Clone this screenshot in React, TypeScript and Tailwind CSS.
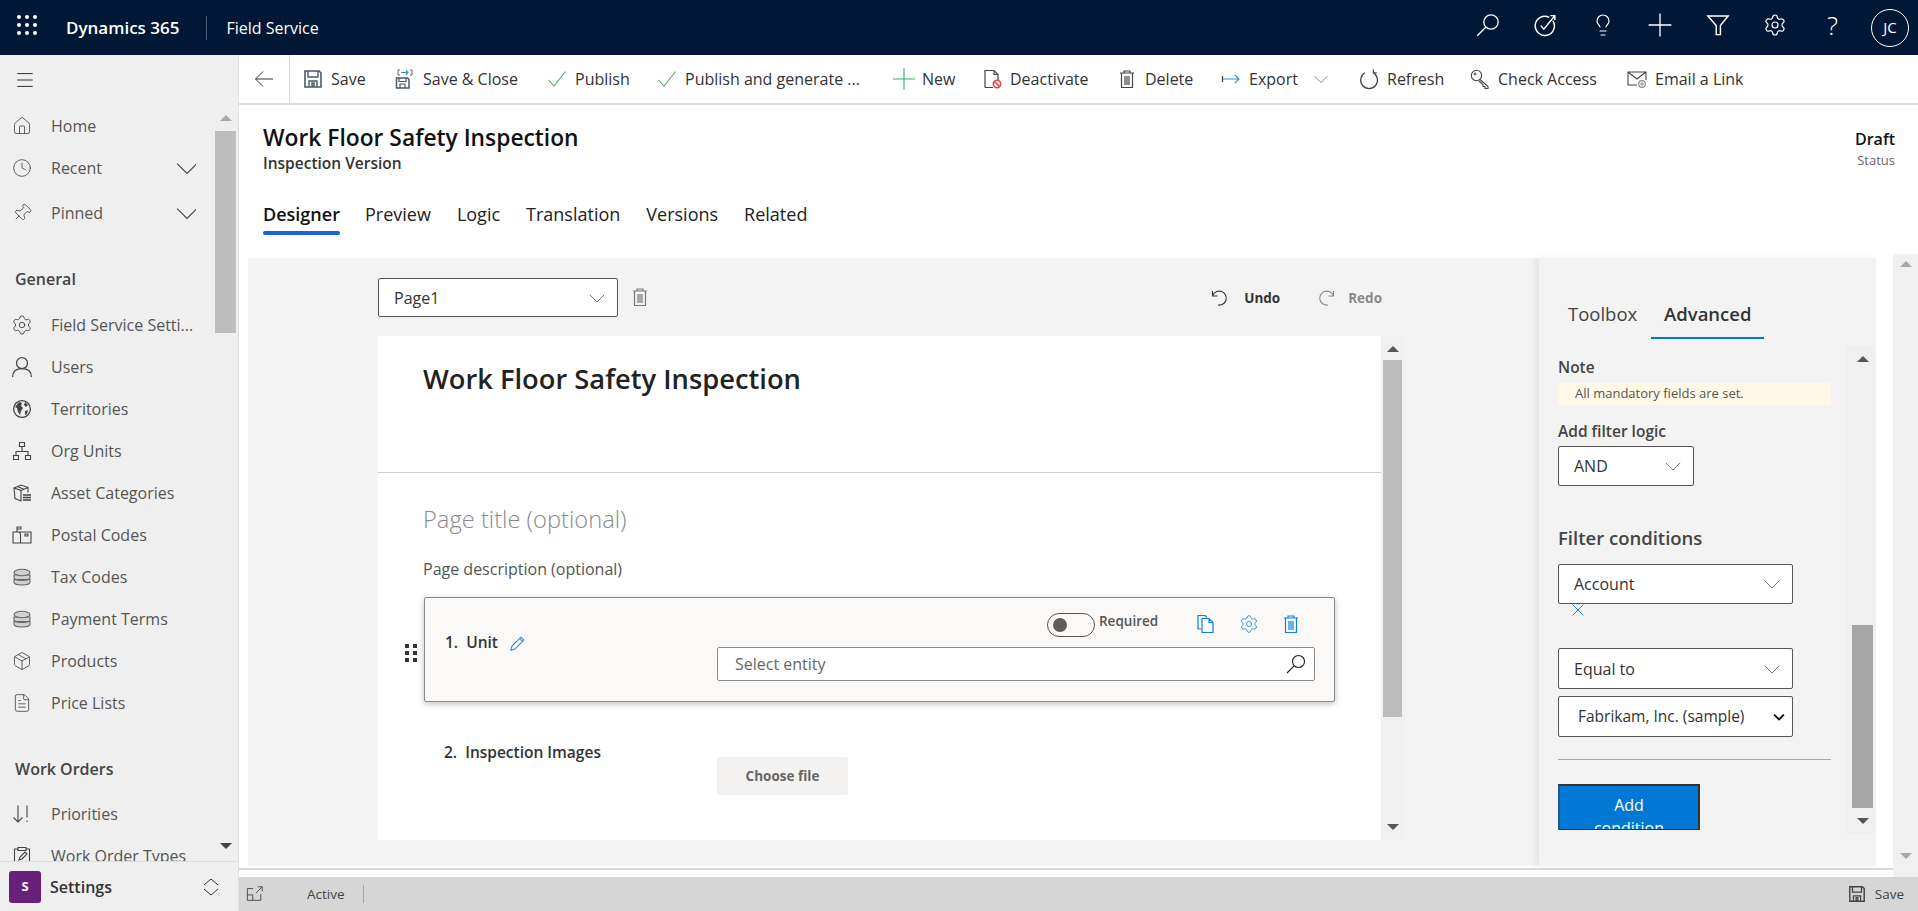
import type { ReactNode } from "react";
import {
  Clock,
  FileText,
  Home,
  Lightbulb,
  Menu,
  Package,
  Pin,
  Settings as Gear,
} from "lucide-react";

function Ico({ children, className = "" }: { children: ReactNode; className?: string }) {
  return (
    <svg viewBox="0 0 20 20" fill="none" stroke="currentColor" strokeWidth="1" className={"w-5 h-5 shrink-0 " + className}>
      {children}
    </svg>
  );
}

const Chev = ({ className = "" }: { className?: string }) => (
  <Ico className={className}>
    <path d="M1 6l9 9 9-9" />
  </Ico>
);

const Magnifier = ({ className = "", width = "1" }: { className?: string; width?: string }) => (
  <Ico className={className}>
    <circle cx="12.5" cy="7.5" r="6" strokeWidth={width} />
    <path d="M8.2 11.800L1 19" strokeWidth={width} />
  </Ico>
);

const Check = () => (
  <Ico className="text-[#45a86e]">
    <path d="M1.5 11l5.5 6L18.5 2.5" strokeWidth="1.1" />
  </Ico>
);

const TrashIcon = ({ className = "" }: { className?: string }) => (
  <Ico className={className}>
    <path d="M3 4h14M7 4V2h6v2M4.5 4v14.5h11V4M8 7v9M10 7v9M12 7v9" strokeWidth="1.2" />
  </Ico>
);

const SaveIcon = ({ className = "text-[#4a5a68]" }: { className?: string }) => (
  <Ico className={className}>
    <path d="M2 2h14l2 2v14H2z" strokeWidth="1.6" />
    <path d="M5 2v6h10V2M6 18v-6h8v6M9 14h2v3H9z" strokeWidth="1.4" />
  </Ico>
);

const SaveCloseIcon = () => (
  <Ico className="text-[#4a5a68]">
    <path d="M1.5 9h11l1.5 1.5V19h-12.5z" strokeWidth="1.5" />
    <path d="M4 9v3.5h7V9M5 19v-4h5v4" strokeWidth="1.2" />
    <path d="M5 1H3v5h2M15 1h2v5h-2" strokeWidth="1" className="text-[#5a6a78]" />
    <path d="M6 3.5h7M11 1.5l2 2-2 2" stroke="#2f8fd8" strokeWidth="1.1" />
  </Ico>
);

const DeactivateIcon = () => (
  <Ico className="text-[#444]">
    <path d="M3 18.5V1.5h9l4 4v6M12 1.5v4h4M3 18.5h8" strokeWidth="1.2" />
    <circle cx="15" cy="15" r="3.7" stroke="#e8404a" strokeWidth="1.6" />
    <path d="M12.5 12.5l5 5" stroke="#e8404a" strokeWidth="1.6" />
  </Ico>
);

const ExportIcon = () => (
  <Ico>
    <path d="M1.5 7v6" stroke="#444" strokeWidth="1.3" />
    <path d="M2 10h16M14 6l4 4-4 4" stroke="#2f8fd8" strokeWidth="1.1" />
  </Ico>
);

const RefreshIcon = () => (
  <Ico className="h-[22px] text-[#444]">
    <path d="M6 3.800a8.400 8.400 0 1 0 8.200 0M14.400 0.500v3.300h3.300" strokeWidth="1.2" />
  </Ico>
);

const KeyIcon = () => (
  <Ico className="text-[#444]">
    <circle cx="6.5" cy="6.5" r="5.2" strokeWidth="1.1" />
    <circle cx="5" cy="5" r="1" strokeWidth="1" />
    <path d="M10 10.5l8 7v2h-3v-2h-2v-2l-4-3.5" strokeWidth="1.1" />
  </Ico>
);

const EmailIcon = () => (
  <Ico className="text-[#444]">
    <path d="M10 16H1V3h18v8M1 3l9 7 9-7" strokeWidth="1.1" />
    <circle cx="15" cy="15" r="3.3" stroke="#888" strokeWidth="1.2" />
    <circle cx="15" cy="15" r="1.2" stroke="#888" />
  </Ico>
);

const PlusGreen = () => (
  <Ico className="h-[22px] w-[22px] -mx-px text-[#2fb56e]">
    <path d="M10 0v20M0 10h20" strokeWidth="1" />
  </Ico>
);

const commands = [
  { label: "Save", icon: <SaveIcon />, cls: "w-[92px]" },
  { label: "Save & Close", icon: <SaveCloseIcon />, cls: "w-[152px]" },
  { label: "Publish", icon: <Check />, cls: "w-[110px]" },
  { label: "Publish and generate ...", icon: <Check />, cls: "w-[237px]" },
  { label: "New", icon: <PlusGreen />, cls: "w-[88px]" },
  { label: "Deactivate", icon: <DeactivateIcon />, cls: "w-[135px]" },
  { label: "Delete", icon: <TrashIcon className="text-[#444]" />, cls: "w-[104px]" },
  { label: "Export", icon: <ExportIcon />, cls: "w-[138px]", caret: true },
  { label: "Refresh", icon: <RefreshIcon />, cls: "w-[111px]" },
  { label: "Check Access", icon: <KeyIcon />, cls: "w-[157px]" },
  { label: "Email a Link", icon: <EmailIcon />, cls: "w-[130px]" },
];

const RingArrow = () => (
  <Ico className="mb-[6px] w-6 h-6 text-white">
    <path d="M16.5 6.3a8 8 0 1 1-3-2.7" strokeWidth="1.2" />
    <path d="M6.5 10.5l2.5 3L18 2.5M14.5 2.2h3.7v3.7" strokeWidth="1.2" />
  </Ico>
);

const FunnelIcon = () => (
  <Ico className="mb-[6px] w-6 h-6 text-white">
    <path d="M1.5 2.5h17L12 10.5V18H8.5v-7.5z" strokeWidth="1.2" />
  </Ico>
);

function TopBar() {
  return (
    <div className="flex h-[55px] shrink-0 items-center bg-[#001836] text-white">
      <div className="mb-[5px] ml-[17px] grid w-5 grid-cols-3 gap-1">
        {Array.from({ length: 9 }).map((_, i) => (
          <span key={i} className="h-1 w-1 rounded-full bg-white" />
        ))}
      </div>
      <span className="ml-[29px] text-[17px] font-semibold">Dynamics 365</span>
      <span className="ml-[27px] h-6 w-px bg-[#4a5a70]" />
      <span className="ml-[19px] text-[16px]">Field Service</span>
      <div className="ml-auto flex items-center gap-[33.5px] pr-[9px]">
        <Magnifier className="mb-[6px] h-6 w-6" width="1.1" />
        <RingArrow />
        <Lightbulb strokeWidth={1.2} className="mb-[6px] h-6 w-6" />
        <Ico className="mb-[6px] h-6 w-6">
          <path d="M10 0.500v19M0.500 10h19" strokeWidth="1.1" />
        </Ico>
        <FunnelIcon />
        <Gear strokeWidth={1.2} className="mb-[6px] h-6 w-6" />
        <span className="mb-[6px] w-6 text-center text-[26px] font-light leading-7">?</span>
        <span className="ml-[-7px] flex h-[38px] w-[38px] items-center justify-center rounded-full border border-white text-[15px]">JC</span>
      </div>
    </div>
  );
}

function CommandBar() {
  return (
    <div className="flex h-[50px] shrink-0 items-center border-b-2 border-[#dcdcdc] bg-white text-[16px] text-[#333]">
      <div className="flex h-full w-[51px] items-center justify-center border-r border-[#dcdcdc]">
        <Ico className="text-[#333]">
          <path d="M19 10H1.5M9 2.5L1.5 10 9 17.5" />
        </Ico>
      </div>
      <div className="ml-[13px] flex items-center">
        {commands.map((c) => (
          <div key={c.label} className={"flex items-center gap-2 " + c.cls}>
            {c.icon}
            <span className="whitespace-nowrap">{c.label}</span>
            {c.caret && <Chev className="ml-[8px] h-[14px] w-[14px] text-[#555]" />}
          </div>
        ))}
      </div>
    </div>
  );
}

const UserIcon = () => (
  <Ico className="h-[22px] w-[22px]">
    <circle cx="10" cy="6.500" r="5" strokeWidth="1.1" />
    <path d="M1.500 19c0-5 3.500-7.500 8.500-7.500s8.500 2.500 8.500 7.500" strokeWidth="1.1" />
  </Ico>
);

const GlobeIcon = () => (
  <Ico>
    <circle cx="10" cy="10" r="8.4" strokeWidth="1.3" />
    <path d="M3 8l4-5 3 1-1 3 2 2-2 3-1 4-2-3-1-4zM13 3l3 3-2 2-2-2zM13 12l3-1-1 4-2 1z" fill="currentColor" stroke="none" />
  </Ico>
);

const OrgIcon = () => (
  <Ico>
    <path d="M7.5 1.5h5v4h-5zM1.5 14.5h5v4h-5zM13.5 14.5h5v4h-5zM10 5.5v5M4 14.5v-4h12v4" strokeWidth="1.1" />
  </Ico>
);

const AssetIcon = () => (
  <Ico>
    <path d="M2 5l7 2.5V18l-6-2.5zM9 7.500l7-3v5M2 5l7-3 7 2.500M5.500 3.500l7 3" strokeWidth="1.1" />
    <path d="M11 12h8M11 14.500h8M11 17h8" strokeWidth="1.3" />
  </Ico>
);

const MailboxIcon = () => (
  <Ico>
    <path d="M1 18V7h18v11zM6 7a2.500 2.500 0 0 1 2.500 2.500V18M5 7V2h4v2H5M13 11h3v-2h-3z" strokeWidth="1.1" />
  </Ico>
);

const StackIcon = () => (
  <Ico className="text-[#666]">
    <path d="M2 15c0 1.700 3.500 3 8 3s8-1.300 8-3v-2.500H2zM2 10.500c0 1.700 3.500 3 8 3s8-1.300 8-3V8H2z" fill="#cfcfcf" strokeWidth="1.1" />
    <ellipse cx="10" cy="5.500" rx="8" ry="3.200" fill="#cfcfcf" strokeWidth="1.1" />
  </Ico>
);

const PriorityIcon = () => (
  <Ico>
    <path d="M6 1.500V18M1.500 13.500L6 18l4.500-4.500M15 1.500v12M15 16.500v1.500" strokeWidth="1.1" />
  </Ico>
);

const ClipboardIcon = () => (
  <Ico>
    <path d="M6 3H2.500v15h15V3H14M6 1.500h8v3H6zM7 14l1-3 5-5 2 2-5 5z" strokeWidth="1.1" />
  </Ico>
);

const generalItems = [
  { label: "Field Service Setti...", icon: <Gear strokeWidth={1} className="h-[22px] w-[22px] shrink-0" /> },
  { label: "Users", icon: <UserIcon /> },
  { label: "Territories", icon: <GlobeIcon /> },
  { label: "Org Units", icon: <OrgIcon /> },
  { label: "Asset Categories", icon: <AssetIcon /> },
  { label: "Postal Codes", icon: <MailboxIcon /> },
  { label: "Tax Codes", icon: <StackIcon /> },
  { label: "Payment Terms", icon: <StackIcon /> },
  { label: "Products", icon: <Package strokeWidth={1} className="h-5 w-5 shrink-0" /> },
  { label: "Price Lists", icon: <FileText strokeWidth={1} className="h-5 w-5 shrink-0" /> },
];

function NavRow({ label, icon, chevron }: { label: string; icon: ReactNode; chevron?: boolean }) {
  return (
    <div className="flex h-[42px] shrink-0 items-center gap-[19px] pl-[12px] text-[16px] text-[#555]">
      <span className="flex w-5 justify-center text-[#444]">{icon}</span>
      <span className="whitespace-nowrap">{label}</span>
      {chevron && <Chev className="ml-auto mr-[-4px] h-[22px] w-[22px] text-[#444]" />}
    </div>
  );
}

function NavHeader({ children, cls }: { children: ReactNode; cls: string }) {
  return <div className={"shrink-0 pl-[15px] pt-[35px] text-[16px] font-semibold leading-5 text-[#444] " + cls}>{children}</div>;
}

function Sidebar() {
  return (
    <div className="flex w-[239px] shrink-0 flex-col border-r border-[#e2e2e2] bg-[#efefef]">
      <div className="flex h-[50px] shrink-0 items-center pl-[14px]">
        <Menu strokeWidth={1} className="h-[22px] w-[22px] text-[#222]" />
      </div>
      <div className="flex min-h-0 flex-1">
        <div className="w-[196px] shrink-0 overflow-hidden pr-[2px]">
          <NavRow label="Home" icon={<Home strokeWidth={1} className="h-5 w-5" />} />
          <NavRow label="Recent" icon={<Clock strokeWidth={1} className="h-[22px] w-[22px]" />} chevron />
          <div className="h-[3px]" />
          <NavRow label="Pinned" icon={<Pin strokeWidth={1} className="h-5 w-5 rotate-45" />} chevron />
          <NavHeader cls="h-[70px]">General</NavHeader>
          {generalItems.map((it) => (
            <NavRow key={it.label} label={it.label} icon={it.icon} />
          ))}
          <NavHeader cls="h-[69px]">Work Orders</NavHeader>
          <NavRow label="Priorities" icon={<PriorityIcon />} />
          <NavRow label="Work Order Types" icon={<ClipboardIcon />} />
        </div>
        <div className="ml-[19px] mt-[2px] flex w-[21px] flex-col items-center">
          <span className="mt-[8px] h-0 w-0 border-x-[6px] border-b-[6px] border-x-transparent border-b-[#a8a8a8]" />
          <div className="mt-[10px] h-[202px] w-full bg-[#bdbdbd]" />
          <span className="mt-auto mb-[12px] h-0 w-0 border-x-[6px] border-t-[6px] border-x-transparent border-t-[#444]" />
        </div>
      </div>
      <div className="flex h-[50px] shrink-0 items-center border-t border-[#dcdcdc] pl-[9px]">
        <span className="flex h-8 w-8 items-center justify-center rounded-[3px] bg-[#68217a] text-[13px] font-bold text-white">S</span>
        <span className="ml-[9px] text-[16px] font-semibold text-[#333]">Settings</span>
        <Ico className="ml-auto mr-[17px] text-[#333]">
          <path d="M3 8l7-6 7 6M3 12l7 6 7-6" />
        </Ico>
      </div>
    </div>
  );
}

function ScrollStrip({ thumb, up = "border-b-[#555]", down = "border-t-[#555]" }: { thumb?: ReactNode; up?: string; down?: string }) {
  return (
    <div className="flex h-full flex-col items-center">
      <span className={"mt-[10px] h-0 w-0 border-x-[6px] border-b-[6px] border-x-transparent " + up} />
      {thumb}
      <span className={"mt-auto mb-[10px] h-0 w-0 border-x-[6px] border-t-[6px] border-x-transparent " + down} />
    </div>
  );
}

function Select({ label, cls }: { label: string; cls: string }) {
  return (
    <div className={"flex items-center justify-between rounded-[2px] border border-[#555] bg-white pl-[15px] pr-[12px] text-[16px] text-[#333] " + cls}>
      <span>{label}</span>
      <Chev className="h-[16px] w-[16px] text-[#555]" />
    </div>
  );
}

function Designer() {
  return (
    <div className="min-w-0 flex-1 pl-[130px]">
      <div className="flex h-[78px] items-start pt-[20px]">
        <Select label="Page1" cls="h-[39px] w-[240px]" />
        <TrashIcon className="ml-[12px] mt-[9px] text-[#777]" />
        <div className="ml-auto mr-[157px] mt-[10px] flex items-center text-[13.5px] font-bold">
          <Ico className="text-[#333]">
            <path d="M3 7h0a7 7 0 1 1 5 10M2.500 3v5h5" strokeWidth="1.1" />
          </Ico>
          <span className="ml-[14px] text-[#333]">Undo</span>
          <Ico className="ml-[36px] text-[#888]">
            <path d="M17 7a7 7 0 1 0-5 10M17.500 3v5h-5" strokeWidth="1.1" />
          </Ico>
          <span className="ml-[12px] text-[#888]">Redo</span>
        </div>
      </div>
      <div className="flex h-[504px] w-[1026px] bg-white">
        <div className="w-[1003px] shrink-0">
          <div className="h-[137px] border-b border-[#cfcfcf] pl-[45px] pt-[25px] text-[27.3px] font-semibold leading-9 text-[#222]">
            Work Floor Safety Inspection
          </div>
          <div className="pl-[45px] pt-[29px] text-[23.7px] font-light leading-[34px] text-[#8a8a8a]">Page title (optional)</div>
          <div className="pl-[45px] pt-[23px] text-[16px] leading-5 text-[#555]">Page description (optional)</div>
          <div className="relative ml-[46px] mt-[18px] flex h-[105px] w-[911px] rounded-[2px] border border-[#8a8a8a] bg-[#faf9f7] pl-[20px] shadow-[0_2px_6px_rgba(0,0,0,0.25)]">
            <div className="absolute left-[-20px] top-[46px] grid grid-cols-2 gap-x-[4px] gap-y-[3px]">
              {Array.from({ length: 6 }).map((_, i) => (
                <span key={i} className="h-[4px] w-[4px] bg-[#333]" />
              ))}
            </div>
            <div className="flex w-[272px] shrink-0 items-start pt-[33px] text-[15.5px] font-semibold text-[#333]">
              <span>1.&nbsp;&nbsp;Unit</span>
              <Ico className="ml-[11px] mt-[4px] h-[17px] w-[17px] text-[#1e88e5]">
                <path d="M2 18l1.500-5L14 2.500l3.500 3.500L7 16.500zM12.500 4l3.500 3.500" strokeWidth="1.2" />
              </Ico>
            </div>
            <div className="flex w-[598px] shrink-0 flex-col">
              <div className="flex h-[49px] items-center pl-[330px] pb-[2px]">
                <span className="mt-[6px] flex h-[24px] w-[48px] items-center rounded-full border border-[#555] pl-[5px]">
                  <span className="h-[14px] w-[14px] rounded-full bg-[#605e5c]" />
                </span>
                <span className="ml-[4px] text-[13.5px] font-semibold text-[#555]">Required</span>
                <Ico className="ml-[38px] mt-[5px] text-[#0f7fe0]">
                  <path d="M5 15H2V1.500h7l2 2M6 4.500h7l4 4v10H6zM13 4.500v4h4" strokeWidth="1.200" />
                </Ico>
                <Gear strokeWidth={1} className="ml-[23px] mt-[5px] h-5 w-5 text-[#0f7fe0]" />
                <TrashIcon className="ml-[22px] mt-[5px] text-[#0f7fe0]" />
              </div>
              <div className="flex h-[34px] items-center justify-between rounded-[2px] border border-[#8a8a8a] bg-white pl-[17px] pr-[8px] text-[16px] text-[#666]">
                <span>Select entity</span>
                <Magnifier className="text-[#222]" width="1.1" />
              </div>
            </div>
          </div>
          <div className="ml-[66px] mt-[39px] flex">
            <div className="w-[273px] shrink-0 text-[15.5px] font-semibold text-[#333]">2.&nbsp;&nbsp;Inspection Images</div>
            <div className="mt-[16px] flex h-[38px] w-[131px] items-center justify-center rounded-[2px] bg-[#f3f2f1] text-[13.5px] font-bold text-[#666]">
              Choose file
            </div>
          </div>
        </div>
        <div className="flex-1 bg-[#f0f0f0]">
          <ScrollStrip thumb={<div className="mt-[8px] h-[357px] w-[19px] bg-[#bdbdbd]" />} />
        </div>
      </div>
    </div>
  );
}

function PanelLabel({ children }: { children: ReactNode }) {
  return <div className="text-[15.5px] font-semibold leading-5 text-[#444]">{children}</div>;
}

function RightPanel() {
  return (
    <div className="flex w-[337px] shrink-0 flex-col shadow-[-4px_0_6px_rgba(0,0,0,0.06)]">
      <div className="h-[88px] pl-[29px] pt-[45px]">
        <div className="flex text-[18.5px] leading-[22px] text-[#444]">
          <span>Toolbox</span>
          <div className="ml-[14px] flex w-[113px] flex-col items-center">
            <span className="font-semibold text-[#333]">Advanced</span>
            <span className="mt-[12px] h-[2px] w-full bg-[#0078d4]" />
          </div>
        </div>
      </div>
      <div className="flex h-[488px]">
        <div className="h-[484px] w-[306px] shrink-0 overflow-hidden pl-[19px]">
          <div className="pt-[11px]">
            <PanelLabel>Note</PanelLabel>
          </div>
          <div className="mt-[6px] flex h-[22px] w-[273px] items-center bg-[#fff8e6] pl-[17px] text-[13px] text-[#555]">All mandatory fields are set.</div>
          <div className="mt-[16px]">
            <PanelLabel>Add filter logic</PanelLabel>
          </div>
          <Select label="AND" cls="mt-[5px] h-[40px] w-[136px]" />
          <div className="mt-[40px] text-[18.5px] font-semibold leading-6 text-[#444]">Filter conditions</div>
          <Select label="Account" cls="mt-[14px] h-[40px] w-[235px]" />
          <Ico className="ml-[14px] mb-[2px] h-[12px] w-[12px] text-[#0078d4]">
            <path d="M1 1l18 18M19 1L1 19" strokeWidth="1.500" />
          </Ico>
          <Select label="Equal to" cls="mt-[32px] h-[41px] w-[235px]" />
          <div className="mt-[7px] flex h-[41px] w-[235px] items-center justify-between rounded-[2px] border border-[#555] bg-white pl-[19px] pr-[6px] text-[15.5px] text-[#333]">
            <span>Fabrikam, Inc. (sample)</span>
            <Ico className="h-[14px] w-[14px] text-[#111]">
              <path d="M3 6.500l7 7 7-7" strokeWidth="2.600" />
            </Ico>
          </div>
          <div className="mt-[22px] h-px w-[273px] bg-[#a8a8a8]" />
          <div className="mt-[24px] h-[47px] w-[142px] overflow-hidden border-2 border-[#333] border-l-[#1a5a90] bg-[#0078d4] pt-[8px] text-center text-[16px] leading-[23px] text-white">
            Add
            <br />
            condition
          </div>
        </div>
        <div className="ml-[1px] flex-1 bg-[#f0f0f0] pr-[3px] pl-[6px]">
          <ScrollStrip thumb={<div className="mt-[263px] h-[183px] w-[21px] bg-[#a6a6a6]" />} />
        </div>
      </div>
    </div>
  );
}

export default function App() {
  return (
    <div className="flex h-[911px] w-[1918px] flex-col overflow-hidden bg-white font-['Open_Sans',sans-serif]">
      <TopBar />
      <div className="flex min-h-0 flex-1">
        <Sidebar />
        <div className="flex min-w-0 flex-1 flex-col">
          <CommandBar />
          <div className="h-[149px] shrink-0 pl-[24px] pr-[23px]">
            <div className="flex items-start justify-between">
              <div>
                <h1 className="mt-[18px] text-[22.8px] font-semibold leading-[30px] text-[#111]">Work Floor Safety Inspection</h1>
                <div className="text-[15.5px] font-semibold leading-5 text-[#333]">Inspection Version</div>
              </div>
              <div className="mt-[24px] text-right">
                <div className="text-[16px] font-semibold leading-5 text-[#111]">Draft</div>
                <div className="mt-[1px] text-[13px] leading-5 text-[#666]">Status</div>
              </div>
            </div>
            <div className="mt-[30px] flex text-[18px] leading-[22px] text-[#222]">
              <div className="mr-[25px] flex w-[77px] flex-col">
                <span className="whitespace-nowrap font-semibold text-[#111]">Designer</span>
                <span className="mt-[6px] h-[4px] rounded-full bg-[#1a63e0]" />
              </div>
              <span className="mr-[26px]">Preview</span>
              <span className="mr-[26px]">Logic</span>
              <span className="mr-[26px]">Translation</span>
              <span className="mr-[26px]">Versions</span>
              <span>Related</span>
            </div>
          </div>
          <div className="flex min-h-0 flex-1">
            <div className="min-w-0 flex-1 pt-[4px]">
              <div className="ml-[9px] flex h-[608px] w-[1628px] bg-[#f3f3f3]">
                <Designer />
                <RightPanel />
              </div>
              <div className="mt-[2px] h-[2px] bg-[#d8d8d8]" />
            </div>
            <div className="w-[25px] shrink-0 bg-[#f0f0f0]">
              <div className="-mt-[3px] h-[618px]">
                <ScrollStrip up="border-b-[#a8a8a8]" down="border-t-[#a8a8a8]" />
              </div>
            </div>
          </div>
          <div className="flex h-[34px] shrink-0 items-center bg-[#d6d6d6] text-[13.5px] text-[#444]">
            <Ico className="ml-[7px] h-[18px] w-[18px] text-[#444]">
              <path d="M8 4H1.500v13h15v-7M1.500 11h6v6M11 9l7-7M13 2h5v5" />
            </Ico>
            <span className="ml-[43px]">Active</span>
            <span className="ml-[18px] h-[18px] w-px bg-[#a8a8a8]" />
            <SaveIcon className="ml-auto h-[18px] w-[18px] text-[#444]" />
            <span className="ml-[9px] mr-[14px]">Save</span>
          </div>
        </div>
      </div>
    </div>
  );
}
